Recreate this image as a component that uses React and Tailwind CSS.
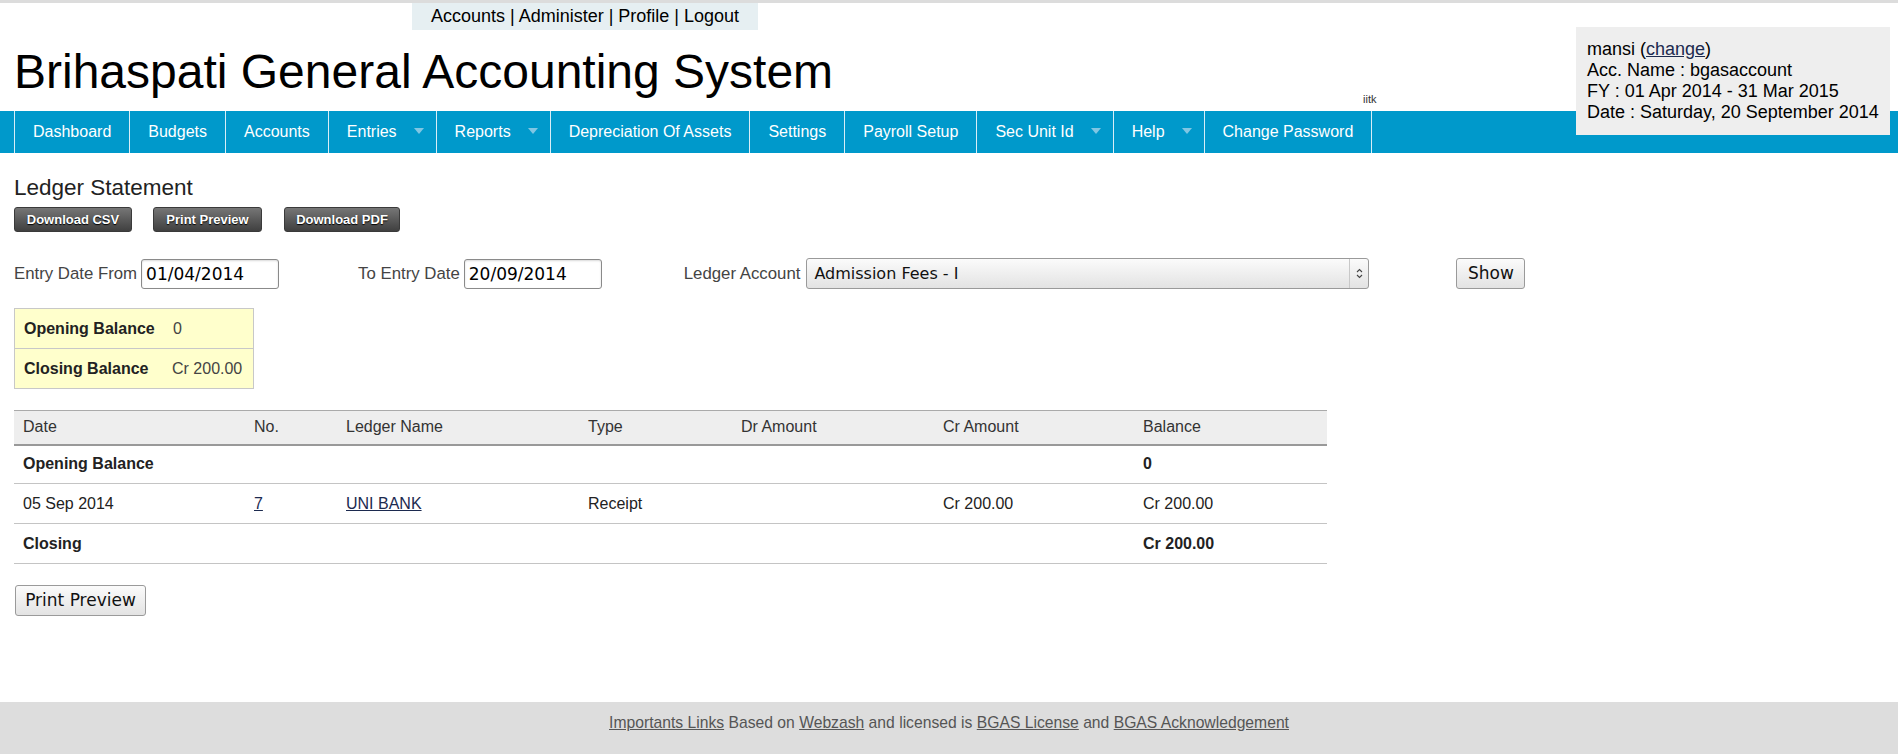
import React from 'react';

const navItems = [
  { label: 'Dashboard' },
  { label: 'Budgets' },
  { label: 'Accounts' },
  { label: 'Entries', drop: true },
  { label: 'Reports', drop: true },
  { label: 'Depreciation Of Assets' },
  { label: 'Settings' },
  { label: 'Payroll Setup' },
  { label: 'Sec Unit Id', drop: true },
  { label: 'Help', drop: true },
  { label: 'Change Password' },
];

const DropArrow = () => (
  <svg width="10" height="6" viewBox="0 0 10 6" className="ml-[17px] -mt-[3px]">
    <path d="M0 0 L10 0 L5 6 Z" fill="#80c6e3" />
  </svg>
);

const darkBtn = 'h-[25px] rounded-[3px] border border-[#3a3a3a] bg-gradient-to-b from-[#767676] to-[#404040] text-white text-[13px] font-bold [text-shadow:0_1px_1px_#000] leading-none';
const dateInput = 'h-[30px] w-[138px] border border-[#8a8a8a] rounded-[3px] px-[4px] text-[17px] text-black bg-white [font-family:"DejaVu_Sans",sans-serif] shadow-[inset_0_1px_2px_rgba(0,0,0,0.15)]';
const lightBtn = 'border border-[#9a9a9a] rounded-[3px] bg-gradient-to-b from-[#fbfbfb] to-[#e3e3e3] text-[#111] [font-family:"DejaVu_Sans",sans-serif]';
const link = 'text-[#1c2a4f] underline';

const rows = [
  { date: <b>Opening Balance</b>, no: '', name: '', type: '', dr: '', cr: '', bal: <b>0</b> },
  { date: '05 Sep 2014', no: <a className={link} href="#">7</a>, name: <a className={link} href="#">UNI BANK</a>, type: 'Receipt', dr: '', cr: 'Cr 200.00', bal: 'Cr 200.00' },
  { date: <b>Closing</b>, no: '', name: '', type: '', dr: '', cr: '', bal: <b>Cr 200.00</b> },
];

export default function App() {
  return (
    <div className="min-h-screen flex flex-col bg-white text-[#222] [font-family:'Liberation_Sans',Arial,sans-serif]">
      <div className="relative">
        <div className="h-[3px] bg-[#dcdcdc]" />
        <div className="ml-[412px] w-[346px] h-[27px] bg-[#e6eff2] text-[18px] leading-[27px] text-black text-center">
          Accounts | Administer | Profile | Logout
        </div>

        <div className="flex items-end h-[81px] pl-[14px]">
          <div className="w-[1349px] shrink-0 text-[48px] leading-[48px] text-black mb-[15px]">
            Brihaspati General Accounting System
          </div>
          <div className="text-[11px] leading-[12px] text-[#333] mb-[6px]">iitk</div>
        </div>

        <div className="h-[42px] bg-[#0099cb] flex pl-[14px]">
          {navItems.map((item, i) => (
            <div
              key={item.label}
              className={`flex items-center border-l border-[#d8eef7] text-white text-[16px] ${item.drop ? 'pl-[18px] pr-[12px]' : 'px-[18px]'} ${i === navItems.length - 1 ? 'border-r' : ''}`}
            >
              <span>{item.label}</span>
              {item.drop && <DropArrow />}
            </div>
          ))}
        </div>

        <div className="absolute top-[27px] right-[8px] w-[314px] h-[108px] bg-[#eeeeee] pl-[11px] pt-[12px] text-[18px] leading-[21px] text-black">
          <div>mansi (<a className={link} href="#">change</a>)</div>
          <div>Acc. Name : bgasaccount</div>
          <div>FY : 01 Apr 2014 - 31 Mar 2015</div>
          <div>Date : Saturday, 20 September 2014</div>
        </div>
      </div>

      <div className="px-[14px] flex flex-col items-start">
        <div className="mt-[23px] text-[22.5px] leading-[24px] text-[#222]">Ledger Statement</div>

        <div className="mt-[7px] flex">
          <button className={`${darkBtn} w-[118px]`}>Download CSV</button>
          <button className={`${darkBtn} w-[109px] ml-[21px]`}>Print Preview</button>
          <button className={`${darkBtn} w-[116px] ml-[22px]`}>Download PDF</button>
        </div>

        <div className="mt-[26px] flex items-center text-[16.8px] text-[#444]">
          <span>Entry Date From</span>
          <input className={`${dateInput} ml-[4px]`} defaultValue="01/04/2014" />
          <span className="ml-[79px]">To Entry Date</span>
          <input className={`${dateInput} ml-[4px]`} defaultValue="20/09/2014" />
          <span className="ml-[82px]">Ledger Account</span>
          <div className={`${lightBtn} ml-[6px] w-[563px] h-[31px] flex items-center text-[16px]`}>
            <span className="flex-1 pl-[7px]">Admission Fees - I</span>
            <div className="w-[19px] h-full flex items-center justify-center border-l border-[#c8c8c8]">
              <svg width="7" height="11" viewBox="0 0 7 11">
                <path d="M1 4 L3.5 1.5 L6 4 M1 7 L3.5 9.5 L6 7" stroke="#444" strokeWidth="1.1" fill="none" />
              </svg>
            </div>
          </div>
          <button className={`${lightBtn} ml-[87px] w-[69px] h-[31px] text-[17px]`}>Show</button>
        </div>

        <div className="mt-[19px] w-[240px] border border-[#c8c8c8] bg-[#ffffcc] text-[16px]">
          <div className="grid grid-cols-[148px_1fr] h-[40px] items-center border-b border-[#c8c8c8]">
            <b className="pl-[9px] text-[#222]">Opening Balance</b>
            <span className="pl-[10px] text-[#444]">0</span>
          </div>
          <div className="grid grid-cols-[148px_1fr] h-[39px] items-center">
            <b className="pl-[9px] text-[#222]">Closing Balance</b>
            <span className="pl-[9px] text-[#444]">Cr 200.00</span>
          </div>
        </div>

        <table className="mt-[21px] w-[1313px] table-fixed border-collapse text-[16px] text-left">
          <colgroup>
            <col className="w-[231px]" />
            <col className="w-[92px]" />
            <col className="w-[242px]" />
            <col className="w-[153px]" />
            <col className="w-[202px]" />
            <col className="w-[200px]" />
            <col className="w-[193px]" />
          </colgroup>
          <thead>
            <tr className="bg-[#eeeeee] border-t border-[#aaaaaa] border-b-2 border-b-[#999999] h-[34px] text-[#333]">
              {['Date', 'No.', 'Ledger Name', 'Type', 'Dr Amount', 'Cr Amount', 'Balance'].map((h) => (
                <th key={h} className="font-normal pl-[9px]">{h}</th>
              ))}
            </tr>
          </thead>
          <tbody>
            {rows.map((r, i) => (
              <tr key={i} className={`border-b border-[#c4c4c4] ${i === 0 ? 'h-[39px]' : 'h-[40px]'} text-[#222]`}>
                <td className="pl-[9px]">{r.date}</td>
                <td className="pl-[9px]">{r.no}</td>
                <td className="pl-[9px]">{r.name}</td>
                <td className="pl-[9px]">{r.type}</td>
                <td className="pl-[9px]">{r.dr}</td>
                <td className="pl-[9px]">{r.cr}</td>
                <td className="pl-[9px]">{r.bal}</td>
              </tr>
            ))}
          </tbody>
        </table>

        <button className={`${lightBtn} mt-[21px] ml-[1px] w-[131px] h-[31px] text-[17px]`}>Print Preview</button>
      </div>

      <div className="mt-auto h-[52px] bg-[#dddddd] pt-[12px] text-center text-[15.7px] leading-[18px] text-[#555]">
        <a className="underline" href="#">Importants Links</a> Based on <a className="underline" href="#">Webzash</a> and licensed is{' '}
        <a className="underline" href="#">BGAS License</a> and <a className="underline" href="#">BGAS Acknowledgement</a>
      </div>
    </div>
  );
}
